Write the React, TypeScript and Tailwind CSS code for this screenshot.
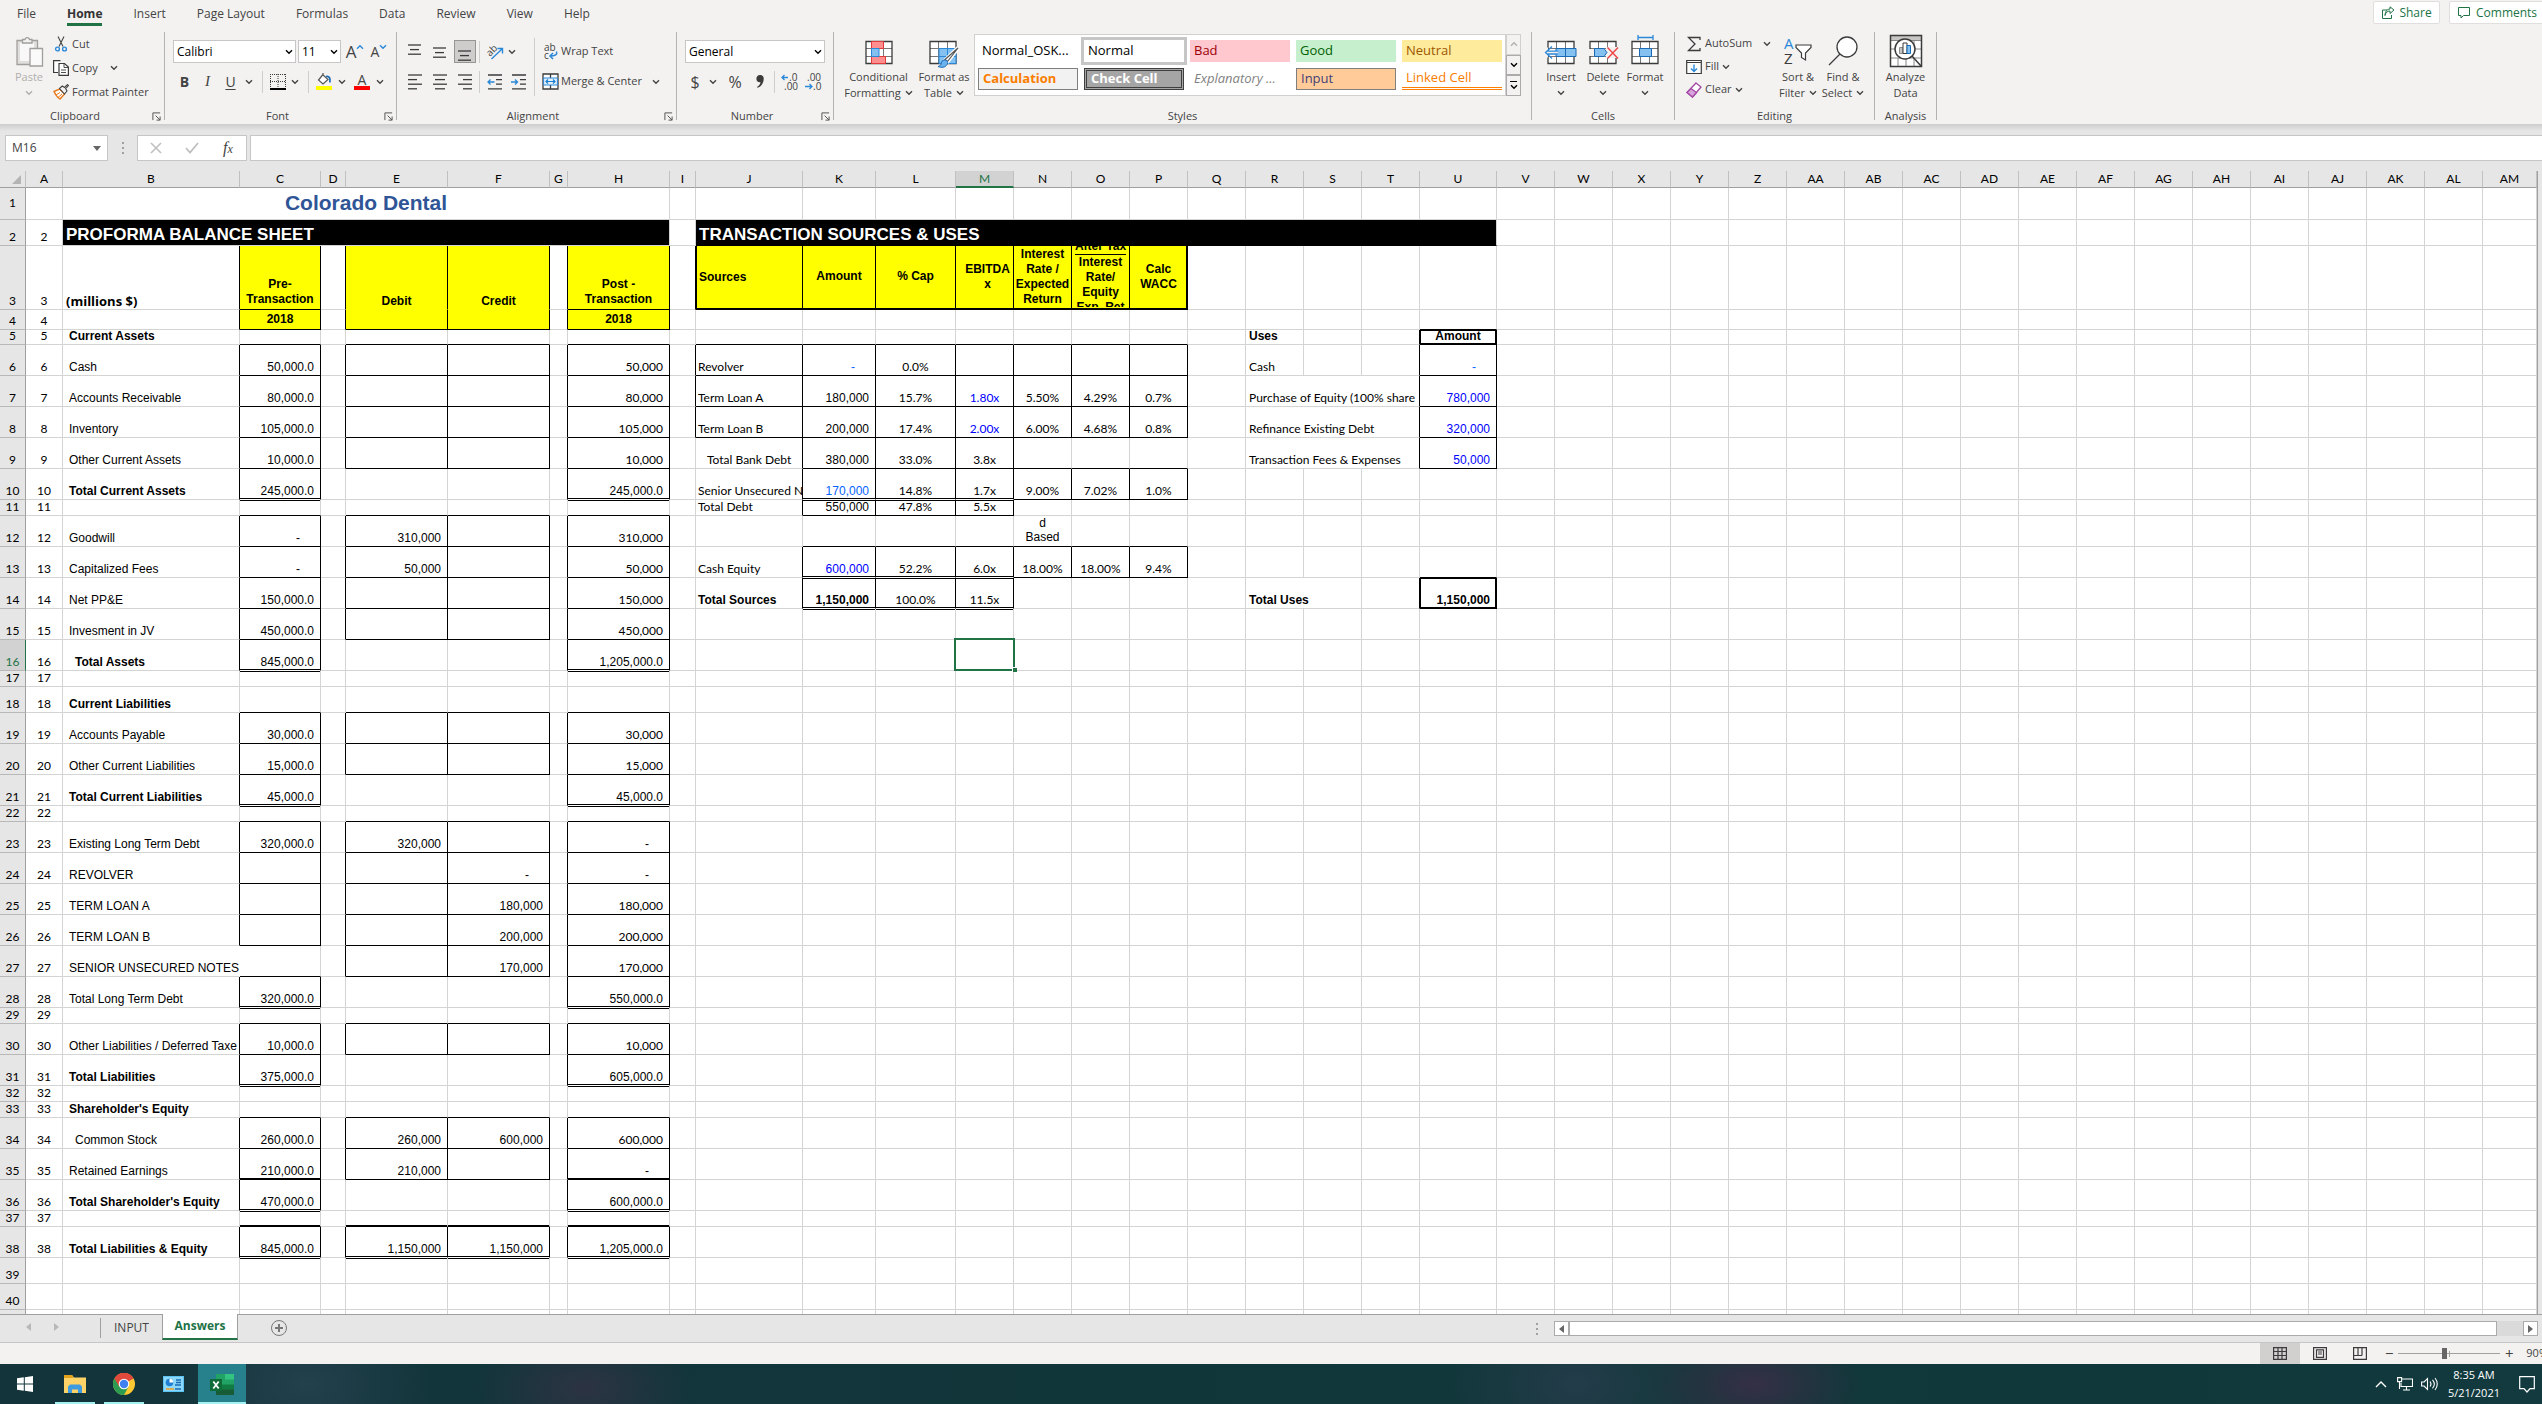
import type { ReactNode } from "react";
import clsx from "clsx";

/* ------------------------------------------------------------------ */
/* Sheet geometry                                                      */
/* ------------------------------------------------------------------ */

const COLS: [string, number][] = [
  ["A", 37], ["B", 177], ["C", 81], ["D", 25], ["E", 102], ["F", 102], ["G", 18], ["H", 102], ["I", 26],
  ["J", 107], ["K", 73], ["L", 80], ["M", 58], ["N", 58], ["O", 58], ["P", 58], ["Q", 58], ["R", 58],
  ["S", 58], ["T", 58], ["U", 77], ["V", 58], ["W", 58], ["X", 58], ["Y", 58], ["Z", 58], ["AA", 58],
  ["AB", 58], ["AC", 58], ["AD", 58], ["AE", 58], ["AF", 58], ["AG", 58], ["AH", 58], ["AI", 58],
  ["AJ", 58], ["AK", 58], ["AL", 58], ["AM", 0],
];

const ROW_HEIGHTS = [
  32, 26, 64, 20, 15, 31, 31, 31, 31, 31, 16, 31, 31, 31, 31, 31, 16, 26, 31, 31, 31, 16, 31, 31, 31, 31, 31,
  31, 16, 31, 31, 16, 16, 31, 31, 31, 16, 31, 26, 26,
];

const colIndex = (name: string) => COLS.findIndex(([c]) => c === name);

/* ------------------------------------------------------------------ */
/* Cell borders                                                        */
/* ------------------------------------------------------------------ */

const blackRight = new Set<string>();
const blackBottom = new Set<string>();
const doubleBottom = new Set<string>();
const thickBottom = new Set<string>();

function box(from: string, r1: number, to: string, r2: number) {
  for (let c = colIndex(from); c <= colIndex(to); c++) {
    for (let r = r1; r <= r2; r++) {
      blackRight.add(COLS[c][0] + r);
      blackRight.add(COLS[c - 1][0] + r);
      blackBottom.add(COLS[c][0] + r);
      blackBottom.add(COLS[c][0] + (r - 1));
    }
  }
}

const BOXES: [string, number, string, number][] = [
  ["C", 3, "C", 4], ["E", 3, "F", 4], ["H", 3, "H", 4],
  ["C", 6, "C", 10], ["E", 6, "F", 9], ["H", 6, "H", 10],
  ["C", 12, "C", 16], ["E", 12, "F", 15], ["H", 12, "H", 16],
  ["C", 19, "C", 21], ["E", 19, "F", 20], ["H", 19, "H", 21],
  ["C", 23, "C", 26], ["E", 23, "F", 27], ["H", 23, "H", 28], ["C", 28, "C", 28],
  ["C", 30, "C", 31], ["E", 30, "F", 30], ["H", 30, "H", 31],
  ["C", 34, "C", 36], ["E", 34, "F", 35], ["H", 34, "H", 36],
  ["C", 38, "C", 38], ["E", 38, "F", 38], ["H", 38, "H", 38],
  ["J", 3, "P", 3], ["J", 6, "P", 8], ["K", 9, "M", 9], ["K", 10, "P", 10], ["K", 11, "M", 11],
  ["K", 13, "P", 13], ["K", 14, "M", 14],
  ["U", 5, "U", 9], ["U", 14, "U", 14],
];
BOXES.forEach((b) => box(...b));

["C10", "H10", "C16", "H16", "C21", "H21", "C28", "H28", "C31", "H31", "C36", "H36", "C38", "E38", "F38", "H38",
  "K10", "L10", "M10", "K13", "L13", "M13", "K14", "L14", "M14"].forEach((k) => doubleBottom.add(k));
["C35", "H35", "C37", "E37", "F37", "H37", "K3", "L3", "M3", "N3", "O3"].forEach((k) => thickBottom.add(k));
["E3", "F3"].forEach((k) => blackBottom.delete(k));

/* ------------------------------------------------------------------ */
/* Cell contents                                                       */
/* ------------------------------------------------------------------ */

const ARIAL = "font-['Liberation_Sans',Arial,sans-serif] text-[12px]";
const CALIBRI = "font-[Lato,Calibri,sans-serif] text-[12px]";
const UI = "font-['Open_Sans','Segoe_UI',sans-serif]";

const label = `${ARIAL} pl-1.5 text-left`;
const labelBold = `${ARIAL} pl-1.5 text-left font-bold`;
const num = `${ARIAL} pr-1.5 text-right`;
const numC = `${CALIBRI} pr-1.5 text-right`;
const dash = `${ARIAL} pr-5 text-right`;
const head = `${ARIAL} text-center font-bold bg-[#ffff00]`;
const side = `${CALIBRI} pl-0.5 text-left`;
const mid = `${CALIBRI} text-center`;
const BLUE = "text-[#0000ff]";
const SKY = "text-[#0563ff]";
const BAND = "bg-black text-white font-['Liberation_Sans',Arial,sans-serif] text-[17px] font-bold pl-[3px] text-left";

type Cell = { text: ReactNode; cls: string; span?: number };
const cells: Record<string, Cell> = {};
const put = (ref: string, text: ReactNode, cls: string, span?: number) => {
  cells[ref] = { text, cls, span };
};

put("B1", "Colorado Dental", "text-center align-middle font-['Liberation_Sans',Arial,sans-serif] text-[21px] font-bold text-[#2f5597]", 7);
put("B2", <div className="leading-[17px]">PROFORMA BALANCE SHEET</div>, BAND, 7);
put("J2", <div className="leading-[17px]">TRANSACTION SOURCES & USES</div>, BAND, 12);

put("B3", "(millions $)", `${UI} text-[13px] font-bold pl-[3px] text-left`);
put("C3", <div className="leading-[15px]">Pre-<br />Transaction</div>, head);
put("E3", "Debit", head);
put("F3", "Credit", head);
put("H3", <div className="leading-[15px]">Post -<br />Transaction</div>, head);
put("C4", "2018", `${head} align-middle`);
put("E4", "", head);
put("F4", "", head);
put("H4", "2018", `${head} align-middle`);

const tall = (lines: ReactNode) => (
  <div className="flex h-[61px] flex-col items-center justify-center overflow-hidden leading-[15px]">{lines}</div>
);
put("J3", "Sources", `${ARIAL} bg-[#ffff00] pl-[3px] text-left font-bold align-middle shadow-[inset_1px_-1px_0_#000]`);
put("K3", tall("Amount"), head);
put("L3", tall("% Cap"), head);
put("M3", tall(<><span>EBITDA</span><span>x</span></>), `${head} pl-1.5`);
put("N3", tall(<><span>Interest</span><span>Rate /</span><span>Expected</span><span>Return</span></>), head);
put("O3", tall(
  <>
    <span className="border-b border-black whitespace-nowrap">After Tax</span>
    <span>Interest</span><span>Rate/</span><span>Equity</span>
    <span className="whitespace-nowrap">Exp. Ret</span>
  </>,
), head);
put("P3", tall(<><span>Calc</span><span>WACC</span></>), `${head} shadow-[inset_-1px_-1px_0_#000]`);

put("B5", "Current Assets", labelBold);
put("R5", "Uses", `${ARIAL} pl-[3px] text-left font-bold`);
put("U5", "Amount", `${ARIAL} text-center font-bold shadow-[inset_0_0_0_1px_#000]`);

const LABELS: [number, string, "b" | "n" | "i" | "bi"][] = [
  [6, "Cash", "n"], [7, "Accounts Receivable", "n"], [8, "Inventory", "n"], [9, "Other Current Assets", "n"],
  [10, "Total Current Assets", "b"], [12, "Goodwill", "n"], [13, "Capitalized Fees", "n"], [14, "Net PP&E", "n"],
  [15, "Invesment in JV", "n"], [16, "Total Assets", "bi"], [18, "Current Liabilities", "b"],
  [19, "Accounts Payable", "n"], [20, "Other Current Liabilities", "n"], [21, "Total Current Liabilities", "b"],
  [23, "Existing Long Term Debt", "n"], [24, "REVOLVER", "n"], [25, "TERM LOAN A", "n"], [26, "TERM LOAN B", "n"],
  [27, "SENIOR UNSECURED NOTES", "n"], [28, "Total Long Term Debt", "n"], [30, "Other Liabilities / Deferred Taxe", "n"],
  [31, "Total Liabilities", "b"], [33, "Shareholder's Equity", "b"], [34, "Common Stock", "i"],
  [35, "Retained Earnings", "n"], [36, "Total Shareholder's Equity", "b"], [38, "Total Liabilities & Equity", "b"],
];
LABELS.forEach(([r, text, kind]) => {
  const styles = { n: label, b: labelBold, i: `${ARIAL} pl-3 text-left`, bi: `${ARIAL} pl-3 text-left font-bold` };
  put(`B${r}`, text, styles[kind]);
});

// pre-transaction, debit, credit, post-transaction
const VALUES: [number, string, string, string, string][] = [
  [6, "50,000.0", "", "", "50,000"], [7, "80,000.0", "", "", "80,000"], [8, "105,000.0", "", "", "105,000"],
  [9, "10,000.0", "", "", "10,000"], [10, "245,000.0", "", "", "245,000.0"], [12, "-", "310,000", "", "310,000"],
  [13, "-", "50,000", "", "50,000"], [14, "150,000.0", "", "", "150,000"], [15, "450,000.0", "", "", "450,000"],
  [16, "845,000.0", "", "", "1,205,000.0"], [19, "30,000.0", "", "", "30,000"], [20, "15,000.0", "", "", "15,000"],
  [21, "45,000.0", "", "", "45,000.0"], [23, "320,000.0", "320,000", "", "-"], [24, "", "", "-", "-"],
  [25, "", "", "180,000", "180,000"], [26, "", "", "200,000", "200,000"], [27, "", "", "170,000", "170,000"],
  [28, "320,000.0", "", "", "550,000.0"], [30, "10,000.0", "", "", "10,000"], [31, "375,000.0", "", "", "605,000.0"],
  [34, "260,000.0", "260,000", "600,000", "600,000"], [35, "210,000.0", "210,000", "", "-"],
  [36, "470,000.0", "", "", "600,000.0"], [38, "845,000.0", "1,150,000", "1,150,000", "1,205,000.0"],
];
VALUES.forEach(([r, pre, debit, credit, post]) => {
  const add = (col: string, v: string, cls: string) => v && put(col + r, v, v === "-" ? dash : cls);
  add("C", pre, num);
  add("E", debit, num);
  add("F", credit, num);
  add("H", post, post.endsWith(".0") ? num : numC);
});

put("J6", "Revolver", side);
put("K6", "-", `${dash} ${SKY}`);
put("L6", "0.0%", mid);
put("J7", "Term Loan A", side);
put("J8", "Term Loan B", side);
put("J9", "Total Bank Debt", `${CALIBRI} pl-[11px] text-left`);
put("J10", "Senior Unsecured Notes", `${side} overflow-hidden`);
put("J11", "Total Debt", side);
put("J13", "Cash Equity", side);
put("J14", "Total Sources", `${ARIAL} pl-0.5 text-left font-bold`);
put("N12", <div className="leading-[14px]">d<br />Based</div>, `${ARIAL} text-center`);

const SOURCES: [number, string, string, string, string?, string?, string?][] = [
  [7, "180,000", "15.7%", "1.80x", "5.50%", "4.29%", "0.7%"],
  [8, "200,000", "17.4%", "2.00x", "6.00%", "4.68%", "0.8%"],
  [9, "380,000", "33.0%", "3.8x"],
  [10, "170,000", "14.8%", "1.7x", "9.00%", "7.02%", "1.0%"],
  [11, "550,000", "47.8%", "5.5x"],
  [13, "600,000", "52.2%", "6.0x", "18.00%", "18.00%", "9.4%"],
  [14, "1,150,000", "100.0%", "11.5x"],
];
SOURCES.forEach(([r, amount, cap, mult, ...rates]) => {
  put(`K${r}`, amount, clsx(num, r === 10 && SKY, r === 13 && BLUE, r === 14 && "font-bold"));
  put(`L${r}`, cap, mid);
  put(`M${r}`, mult, clsx(mid, r < 9 && BLUE));
  rates.forEach((v, i) => v && put("NOP"[i] + r, v, mid));
});

put("R6", "Cash", `${CALIBRI} pl-[3px] text-left`);
put("R7", "Purchase of Equity (100% share", `${CALIBRI} pl-[3px] text-left`, 3);
put("R8", "Refinance Existing Debt", `${CALIBRI} pl-[3px] text-left`, 3);
put("R9", "Transaction Fees & Expenses", `${CALIBRI} pl-[3px] text-left`, 3);
put("R14", "Total Uses", `${ARIAL} pl-[3px] text-left font-bold`, 2);
put("U6", "-", `${dash} ${SKY}`);
put("U7", "780,000", `${num} ${BLUE}`);
put("U8", "320,000", `${num} ${BLUE}`);
put("U9", "50,000", `${num} ${BLUE}`);
put("U14", "1,150,000", `${num} font-bold shadow-[inset_0_0_0_1px_#000]`);

put("M16", (
  <>
    <span className="absolute -inset-x-0.5 -top-0.5 -bottom-px border-2 border-[#217346]" />
    <span className="absolute -right-1 -bottom-0.5 size-[5px] border-t border-l border-white bg-[#217346]" />
  </>
), "relative");

/* ------------------------------------------------------------------ */
/* Small drawing helpers                                               */
/* ------------------------------------------------------------------ */

function Chevron({ className = "text-[#444]" }: { className?: string }) {
  return (
    <svg viewBox="0 0 8 6" className={clsx("h-1.5 w-2 shrink-0", className)} fill="none" stroke="currentColor" strokeWidth="1.4">
      <path d="M1 1.2 4 4.2 7 1.2" />
    </svg>
  );
}

function Lines({ rows, y = 1 }: { rows: [number, number][]; y?: number }) {
  return (
    <svg viewBox="0 0 16 18" className="h-[18px] w-4" stroke="#3b3b3b" strokeWidth="1.3">
      {rows.map(([x1, x2], i) => (
        <path key={i} d={`M${x1} ${y + i * 4.6}H${x2}`} />
      ))}
    </svg>
  );
}

function Launcher({ name }: { name: string }) {
  return (
    <button aria-label={`${name} settings`} className="mr-0.5 grid size-3 place-items-center">
      <svg viewBox="0 0 10 10" className="size-[9px]" fill="none" stroke="#555" strokeWidth="1.1">
        <path d="M1 9V1h8M4 4l5 5M9 5v4H5" />
      </svg>
    </button>
  );
}

function Group({ name, launcher, className, children }: { name: string; launcher?: boolean; className?: string; children: ReactNode }) {
  return (
    <section aria-label={name} className="flex shrink-0">
      <div className={clsx("flex flex-col", className)}>
        <div className="flex h-[76px] items-start">{children}</div>
        <div className="flex h-4 items-center leading-4">
          <span className="flex-1 text-center">{name}</span>
          {launcher && <Launcher name={name} />}
        </div>
      </div>
      <span className="h-[88px] w-px bg-[#b5b3b1]" />
    </section>
  );
}

function Tool({ name, className, children }: { name: string; className?: string; children: ReactNode }) {
  return (
    <button aria-label={name} title={name} className={clsx("flex h-[23px] shrink-0 items-center justify-center", className)}>
      {children}
    </button>
  );
}

function BigTool({ icon, top, bottom, chevron = true, className }: { icon: ReactNode; top: string; bottom?: string; chevron?: boolean; className?: string }) {
  return (
    <button className={clsx("flex shrink-0 flex-col items-center leading-4 whitespace-nowrap", className)}>
      <span className="flex h-[37px] items-center justify-center">{icon}</span>
      <span>{top}</span>
      <span className="flex h-4 items-center gap-1">
        {bottom}
        {chevron && <Chevron className="text-current" />}
      </span>
    </button>
  );
}

const Rule = ({ className }: { className?: string }) => <span className={clsx("h-[22px] w-px shrink-0 bg-[#d0cecc]", className)} />;

/* Grid used as the base of the cell/table icons */
function GridIcon({ children, x = 0 }: { children?: ReactNode; x?: number }) {
  return (
    <svg viewBox="0 0 34 34" className="size-[34px]" fill="none">
      <path d={`M${x + 3} 7.5h26v22h-26z`} fill="#fff" />
      <path d={`M${x + 11.5} 7.5v22M${x + 20.5} 7.5v22M${x + 3} 14.5h26M${x + 3} 22.5h26`} stroke="#777" />
      <path d={`M${x + 3} 7.5h26v22h-26z`} stroke="#3b3b3b" strokeWidth="1.3" />
      {children}
    </svg>
  );
}

/* ------------------------------------------------------------------ */
/* Ribbon                                                              */
/* ------------------------------------------------------------------ */

function Tabs() {
  const tabs = ["File", "Home", "Insert", "Page Layout", "Formulas", "Data", "Review", "View", "Help"];
  return (
    <nav className="flex h-[27px] items-start text-[12px]">
      <div className="flex gap-[31px] pl-[17px]">
        {tabs.map((t) => (
          <button
            key={t}
            className={clsx("h-[26px] leading-[27px]", t === "Home" && "border-b-3 border-[#217346] font-bold text-[#333]")}
          >
            {t}
          </button>
        ))}
      </div>
      <div className="ml-auto flex gap-[9px] pt-px text-[#217346]">
        <button className="flex h-[23px] w-[67px] items-center justify-center gap-1 rounded-xs border border-[#e1dfdd] bg-white">
          <svg viewBox="0 0 14 14" className="size-3.5" fill="none" stroke="currentColor">
            <path d="M6 4H1.5v8.500h9V9M4 9.500c.5-3 2.500-4.500 5-4.500V7.500L13 4 9 .8V3C6 3 4.200 5.500 4 9.500z" />
          </svg>
          Share
        </button>
        <button className="-mr-1 flex h-[23px] w-[97px] items-center gap-[5px] rounded-xs border border-[#e1dfdd] bg-white pl-[7px]">
          <svg viewBox="0 0 14 14" className="size-3.5" fill="none" stroke="currentColor">
            <path d="M1.500 1.500h11v8H6.500L4 12V9.500H1.500z" />
          </svg>
          Comments
        </button>
      </div>
    </nav>
  );
}

function Clipboard() {
  return (
    <Group name="Clipboard" launcher className="w-[164px]">
      <BigTool
        className="ml-[9px] w-10 text-[#b1afad]"
        top="Paste"
        icon={
          <svg viewBox="0 0 30 32" className="h-8 w-[30px]" fill="none" stroke="#a19f9d" strokeWidth="1.3">
            <path d="M3 5.500h20.500v24H3z" fill="#e1dfdd" />
            <path d="M6 8h14v18H6z" fill="#f8f8f8" stroke="none" />
            <path d="M8.500 8V4.500H11a2.300 2.300 0 0 1 4.500 0H18V8z" fill="#f3f2f1" />
            <path d="M16 13.500h12.500v17.500H16z" fill="#fafafa" />
          </svg>
        }
      />
      <div className="ml-1 flex flex-col">
        <button className="flex h-6 items-center gap-[3px]">
          <svg viewBox="0 0 16 16" className="size-4" fill="none" stroke="#444" strokeWidth="1.100">
            <path d="M5 .5l5 10M11 .5l-5 10" />
            <g stroke="#2b88d8" strokeWidth="1.400"><circle cx="4.500" cy="13" r="1.900" /><circle cx="11.500" cy="13" r="1.900" /></g>
          </svg>
          Cut
        </button>
        <button className="flex h-6 items-center gap-[3px]">
          <svg viewBox="0 0 16 16" className="size-4" fill="none" stroke="#3b3b3b" strokeWidth="1.200">
            <path d="M5 12.500H.6V.6h6.900M6 3.500h5.500L15.400 7v8.400H6z" fill="#fff" />
            <path d="M11 3.500v4h4M8 10h5M8 12.500h5" strokeWidth=".9" />
          </svg>
          Copy
          <Chevron className="ml-[9px] text-[#444]" />
        </button>
        <button className="flex h-6 items-center gap-[3px] whitespace-nowrap">
          <svg viewBox="0 0 16 16" className="size-4" fill="none">
            <path d="M1 7.500 6.500 5l5 5-4.500 5C4.500 13.500 2.500 11 1 7.500z" fill="#fff" stroke="#e8791b" strokeWidth="1.400" />
            <path d="M3 11l4-2.500M5 13.500 9 10" stroke="#e8791b" />
            <path d="M6.500 4.500 9.300 2l2.200 1.500L14.500.6l1 1-2.900 3L14 7l-2.500 3z" fill="#f3f2f1" stroke="#444" strokeWidth="1.100" />
          </svg>
          Format Painter
        </button>
      </div>
    </Group>
  );
}

function FontGroup() {
  return (
    <Group name="Font" launcher className="w-[231px] pl-2">
      <div className="flex flex-col gap-[7px] pt-2">
        <div className="flex">
          <Drop name="Font name" value="Calibri" className="w-[123px]" />
          <Drop name="Font size" value="11" className="ml-0.5 w-[43px]" />
          <Tool name="Increase font size" className="ml-0.5 w-6">
            <span className="text-[17px] leading-none">A</span>
            <Chevron className="mb-2.5 rotate-180 text-[#2b88d8]" />
          </Tool>
          <Tool name="Decrease font size" className="w-6">
            <span className="text-[14px] leading-none">A</span>
            <Chevron className="mb-2.5 text-[#2b88d8]" />
          </Tool>
        </div>
        <div className="flex items-center text-[14px]">
          <Tool name="Bold" className="w-[23px] font-bold">B</Tool>
          <Tool name="Italic" className="w-[23px] font-['Liberation_Serif',serif] text-[15px] italic">I</Tool>
          <Tool name="Underline" className="w-[23px] underline underline-offset-2">U</Tool>
          <Tool name="Underline styles" className="w-3.5"><Chevron /></Tool>
          <Rule className="mx-1.5" />
          <Tool name="Borders" className="w-[18px]">
            <svg viewBox="0 0 16 16" className="size-4" fill="none" stroke="#3b3b3b">
              <path d="M.5 0v14M8 0v14M15.500 0v14M0 .5h16M0 7.500h16" strokeDasharray="1 1" />
              <path d="M0 15h16" strokeWidth="2" stroke="#000" />
            </svg>
          </Tool>
          <Tool name="Border styles" className="w-4"><Chevron /></Tool>
          <Rule className="mx-[5px]" />
          <Tool name="Fill color" className="w-5">
            <svg viewBox="0 0 16 17" className="h-[17px] w-4" fill="none">
              <path d="M7 1.500 2.500 7l4.500 4 5-4.500L7 2V0" fill="#fff" stroke="#555" strokeWidth="1.200" />
              <path d="M10 3.500c3-.8 4.800 1.500 3.800 6" stroke="#1a6bb5" strokeWidth="1.800" />
              <path d="M0 13h16v4H0z" fill="#ff0" />
            </svg>
          </Tool>
          <Tool name="Fill colors" className="w-4"><Chevron /></Tool>
          <Tool name="Font color" className="w-6 flex-col">
            <span className="text-[14px] leading-[13px]">A</span>
            <span className="h-1 w-4 bg-[#f00]" />
          </Tool>
          <Tool name="Font colors" className="w-3"><Chevron /></Tool>
        </div>
      </div>
    </Group>
  );
}

function Drop({ name, value, className }: { name: string; value: string; className?: string }) {
  return (
    <label className={clsx("relative flex h-[23px] items-center border border-[#c8c6c4] bg-white text-[12px] text-black", className)}>
      <select aria-label={name} className="h-full w-full appearance-none pl-[3px] outline-none">
        <option>{value}</option>
      </select>
      <span className="pointer-events-none absolute right-0.5"><Chevron className="text-black" /></span>
    </label>
  );
}

function Alignment() {
  return (
    <Group name="Alignment" launcher className="w-[279px] pl-[7px]">
      <div className="flex w-[130px] flex-col gap-[7px] pt-2">
        <div className="flex items-center gap-[3px]">
          <Tool name="Top align" className="w-[22px]"><Lines rows={[[1, 14], [3, 12], [1, 14]]} y={2} /></Tool>
          <Tool name="Middle align" className="w-[22px]"><Lines rows={[[1, 14], [3, 12], [1, 14]]} y={5} /></Tool>
          <Tool name="Bottom align" className="w-[22px] border border-[#979593] bg-[#cfcdcb]"><Lines rows={[[1, 14], [3, 12], [1, 14]]} y={8} /></Tool>
          <Rule />
          <Tool name="Orientation" className="ml-0.5 w-5">
            <svg viewBox="0 0 18 18" className="size-[18px] overflow-visible" fill="none">
              <text x="1" y="11" fontSize="10" fill="#444" transform="rotate(-45 6 9)">ab</text>
              <path d="M5.500 16 16 6M11.500 5.500H16.500V10.500" stroke="#2b88d8" strokeWidth="1.400" />
            </svg>
          </Tool>
          <Chevron />
        </div>
        <div className="flex items-center gap-[3px]">
          <Tool name="Align left" className="w-[22px]"><Lines rows={[[1, 15], [1, 10], [1, 15], [1, 10]]} y={2} /></Tool>
          <Tool name="Center" className="w-[22px]"><Lines rows={[[1, 15], [3, 13], [1, 15], [3, 13]]} y={2} /></Tool>
          <Tool name="Align right" className="w-[22px]"><Lines rows={[[1, 15], [6, 15], [1, 15], [6, 15]]} y={2} /></Tool>
          <Rule />
          {["Decrease indent", "Increase indent"].map((n, i) => (
            <Tool key={n} name={n} className="ml-0.5 w-[19px]">
              <svg viewBox="0 0 16 18" className="h-[18px] w-4" fill="none" strokeWidth="1.300">
                <path d="M1 2h14M9 6.600h6M9 11.200h6M1 15.800h14" stroke="#3b3b3b" />
                <path d={i ? "M0 9h6.500M4 6.500 6.500 9 4 11.500" : "M1 9h6.500M3.500 6.500 1 9l2.500 2.500"} stroke="#2b88d8" />
              </svg>
            </Tool>
          ))}
        </div>
      </div>
      <span className="mt-1.5 h-[58px] w-px bg-[#d0cecc]" />
      <div className="flex flex-col gap-[7px] pt-2 pl-[7px] whitespace-nowrap">
        <button className="flex h-[23px] items-center gap-0.5">
          <svg viewBox="0 0 17 20" className="h-5 w-[17px] overflow-visible" fill="none">
            <text x="2" y="9" fontSize="10" fill="#444">ab</text>
            <text x="2" y="17" fontSize="10" fill="#444">c</text>
            <path d="M14.500 9.500c1 3-1 4.500-6.500 4.500M11 11l-3 3 3 3" stroke="#2b88d8" strokeWidth="1.500" />
          </svg>
          Wrap Text
        </button>
        <button className="flex h-[23px] items-center gap-0.5">
          <svg viewBox="0 0 17 17" className="size-[17px]" fill="none">
            <path d="M1 1h15v15H1zM8.500 1v4M8.500 12v4" fill="#fff" stroke="#3b3b3b" strokeWidth="1.300" />
            <path d="M1.600 5h13.800v7H1.600z" fill="#e5f1fb" stroke="#2b88d8" />
            <path d="M4 8.500h9M6 6.500l-2 2 2 2M11 6.500l2 2-2 2" stroke="#1a7fd0" strokeWidth="1.200" />
          </svg>
          Merge & Center
          <Chevron className="ml-2 text-[#444]" />
        </button>
      </div>
    </Group>
  );
}

function Decimals({ up }: { up?: boolean }) {
  return (
    <svg viewBox="0 0 18 18" className="size-[18px] overflow-visible" fill="none">
      <text x={up ? 8 : 3} y="8" fontSize="10" fill="#444">{up ? ".0" : ".00"}</text>
      <text x={up ? 3 : 9} y="17" fontSize="10" fill="#444">{up ? ".00" : ".0"}</text>
      <path d={up ? "M1 4.500h6M3.500 2 1 4.500 3.500 7" : "M1 13.500h7M5.500 11 8 13.500 5.500 16"} stroke="#2b88d8" strokeWidth="1.300" />
    </svg>
  );
}

function NumberGroup() {
  return (
    <Group name="Number" launcher className="w-[156px] pl-2">
      <div className="flex flex-col gap-[7px] pt-2">
        <Drop name="Number format" value="General" className="w-[140px]" />
        <div className="flex items-center text-[16px]">
          <Tool name="Accounting format" className="w-5">$</Tool>
          <Tool name="Currencies" className="w-4"><Chevron /></Tool>
          <Tool name="Percent style" className="w-7">%</Tool>
          <Tool name="Comma style" className="w-[22px]">
            <svg viewBox="0 0 8 13" className="h-[13px] w-2" fill="#3b3b3b">
              <path d="M4 0a3.500 3.500 0 0 1 3.700 3.800C7.700 8 5.500 11.500 1.500 12.800L1 11.900C3.200 10.800 4.300 9 4.500 7.200 2 7.700.4 6 .4 3.700.4 1.500 2 0 4 0z" />
            </svg>
          </Tool>
          <Rule className="ml-[3px]" />
          <Tool name="Increase decimal" className="ml-1 w-[22px]"><Decimals up /></Tool>
          <Tool name="Decrease decimal" className="w-6"><Decimals /></Tool>
        </div>
      </div>
    </Group>
  );
}

function StylesGroup() {
  const styles: [string, string][] = [
    ["Normal_OSK...", "text-black"],
    ["Normal", "text-black outline-3 outline-[#c6c6c6] ring-1 ring-[#ababab] bg-white"],
    ["Bad", "bg-[#ffc7ce] text-[#9c0006]"],
    ["Good", "bg-[#c6efce] text-[#006100]"],
    ["Neutral", "bg-[#ffeb9c] text-[#9c5700]"],
    ["Calculation", "border border-[#7f7f7f] bg-[#f2f2f2] font-bold text-[#fa7d00]"],
    ["Check Cell", "border-3 border-double border-[#3f3f3f] bg-[#a5a5a5] font-bold text-white"],
    ["Explanatory ...", "text-[#7f7f7f] italic"],
    ["Input", "border border-[#7f7f7f] bg-[#ffcc99] text-[#3f3f76]"],
    ["Linked Cell", "border-b-3 border-double border-[#ff8001] text-[#fa7d00]"],
  ];
  return (
    <Group name="Styles" className="w-[697px]">
      <BigTool
        className="ml-[5px] w-[79px]"
        top="Conditional"
        bottom="Formatting"
        icon={
          <GridIcon x={1}>
            <path d="M9.500 7.500h12v7h-12zM9.500 22.500h14v7h-14z" fill="#ff8f8f" stroke="#e03a3a" />
            <path d="M9.500 14.500h7.500v8H9.500z" fill="#84c0f0" stroke="#2b88d8" />
          </GridIcon>
        }
      />
      <BigTool
        className="w-[52px]"
        top="Format as"
        bottom="Table"
        icon={
          <GridIcon>
            <path d="M12 14.500h17v15H12z" fill="#84c0f0" stroke="#2b88d8" />
            <path d="M20.500 14.500v15M12 22.500h17" stroke="#2b88d8" />
            <path d="M31 14 21 27l-2-1.500z" fill="#fff" stroke="#fff" strokeWidth="4" />
            <path d="M31 14 20.500 27.500 18 25.500z" fill="#fff" stroke="#555" strokeWidth="1.200" />
            <path d="M17 26c3-.5 4.500 2 3 4.500-1.500 3-5.500 3.500-9 2 2-.5 3-1.500 3.200-3 .3-2 1.200-3.200 2.800-3.500z" fill="#6cb2ec" stroke="#1a6bb5" />
          </GridIcon>
        }
      />
      <div className="mt-0.5 ml-1 flex h-[62px]">
        <div className="grid w-[532px] grid-cols-5 gap-1.5 border border-[#d2d0ce] bg-white px-[3px] py-[5px] text-[13px]">
          {styles.map(([name, cls]) => (
            <button key={name} className={clsx("flex h-[22px] items-center pl-1 text-left whitespace-nowrap", cls)}>
              {name}
            </button>
          ))}
        </div>
        <div className="flex w-[15px] flex-col">
          <Tool name="Previous styles" className="w-full flex-1 border border-[#d2d0ce] bg-[#f3f2f1]"><Chevron className="rotate-180 text-[#b0b0b0]" /></Tool>
          <Tool name="Next styles" className="w-full flex-1 border border-[#ababab]"><Chevron className="text-black" /></Tool>
          <Tool name="More styles" className="w-full flex-1 flex-col gap-0.5 border border-[#ababab]">
            <span className="h-px w-[7px] bg-black" />
            <Chevron className="text-black" />
          </Tool>
        </div>
      </div>
    </Group>
  );
}

function CellsGroup() {
  return (
    <Group name="Cells" className="w-[142px] px-2">
      <BigTool
        className="w-[42px]"
        top="Insert"
        icon={
          <GridIcon x={1}>
            <path d="M12 14.500h20v8H12z" fill="#84c0f0" stroke="#1a6bb5" />
            <path d="M21.500 14.500v8" stroke="#1a6bb5" />
            <path d="M14 17H4V13L-1 18.500 4 24v-3.500h10z" fill="#f3f2f1" />
            <path d="M14 17.200H3.500M14 20H3.500M8 12.500 1.500 18.500 8 24.500" stroke="#2b88d8" strokeWidth="1.300" />
          </GridIcon>
        }
      />
      <BigTool
        className="w-[42px]"
        top="Delete"
        icon={
          <GridIcon x={1}>
            <path d="M3 15h6v7H3zM20 13h13v11H20z" fill="#f3f2f1" />
            <path d="M8.500 14.500H18l3 4-3 4H8.500z" fill="#84c0f0" stroke="#1a6bb5" />
            <path d="M21.500 13.500 32 24.500M32 13.500 21.500 24.500" stroke="#f04848" strokeWidth="1.500" />
          </GridIcon>
        }
      />
      <BigTool
        className="w-[42px]"
        top="Format"
        icon={
          <GridIcon x={1}>
            <path d="M11.500 14.500h12v8h-12z" fill="#84c0f0" stroke="#1a6bb5" />
            <path d="M10 3.500h15M10 1v5M25 1v5" stroke="#2b88d8" strokeWidth="1.300" />
          </GridIcon>
        }
      />
    </Group>
  );
}

function EditingGroup() {
  return (
    <Group name="Editing" className="w-[199px]">
      <div className="ml-[11px] flex w-[92px] flex-col">
        <button className="flex h-[23px] items-center gap-[3px]">
          <svg viewBox="0 0 16 16" className="size-4" fill="none" stroke="#3b3b3b" strokeWidth="1.300">
            <path d="M14 4V1.500H2.500L9 8l-6.500 6.500H14V12" />
          </svg>
          AutoSum
          <Chevron className="ml-2 text-[#444]" />
        </button>
        <button className="flex h-[23px] items-center gap-[3px]">
          <svg viewBox="0 0 16 16" className="size-4" fill="none">
            <path d="M.7 1.500h14.600v13H.7zM.7 3.500h14.600" fill="#fff" stroke="#3b3b3b" strokeWidth="1.200" />
            <path d="M8 5.500v7M5 9.500l3 3 3-3" stroke="#2b88d8" strokeWidth="1.400" />
          </svg>
          Fill
          <Chevron />
        </button>
        <button className="flex h-[23px] items-center gap-[3px]">
          <svg viewBox="0 0 16 16" className="size-4" fill="none" stroke="#a349a4" strokeWidth="1.300">
            <path d="M10 1 15 5 6.500 15 1 10.500z" fill="#fff" />
            <path d="M5 6.500 10.500 10.500 6.500 15 1 10.500z" fill="#d9a3dc" />
          </svg>
          Clear
          <Chevron />
        </button>
      </div>
      <BigTool
        className="w-10"
        top="Sort &"
        bottom="Filter"
        icon={
          <svg viewBox="0 0 30 34" className="h-[34px] w-[30px] overflow-visible" fill="none">
            <text x="1" y="15" fontSize="15" fill="#2b88d8">A</text>
            <text x="1" y="30" fontSize="15" fill="#3b3b3b">Z</text>
            <path d="M13 11h15v2.500l-5.500 5.500v7l-4-2.500V19L13 13.500z" fill="#fff" stroke="#3b3b3b" strokeWidth="1.200" />
          </svg>
        }
      />
      <BigTool
        className="ml-0.5 w-[46px]"
        top="Find &"
        bottom="Select"
        icon={
          <svg viewBox="0 0 30 34" className="h-[34px] w-[30px]" fill="none" stroke="#3b3b3b" strokeWidth="1.300">
            <circle cx="19" cy="13" r="10" fill="#fff" />
            <path d="M12 20 1 31" />
          </svg>
        }
      />
    </Group>
  );
}

function AnalysisGroup() {
  return (
    <Group name="Analysis" className="w-[61px] items-stretch">
      <BigTool
        className="w-full"
        top="Analyze"
        bottom="Data"
        chevron={false}
        icon={
          <svg viewBox="0 0 34 34" className="size-[34px]" fill="none">
            <path d="M1.500 1.500h31v31h-31z" fill="#fff" />
            <path d="M1.500 1.500h31v5h-31z" fill="#c8c6c4" />
            <path d="M1.500 6.500h31M1.500 15h31M1.500 24h31M9 24v8M17 24v8M25 24v8M9 6.500V15M25 6.500V15" stroke="#888" />
            <path d="M1.500 1.500h31v31h-31z" stroke="#3b3b3b" strokeWidth="1.500" />
            <circle cx="16" cy="15" r="10" fill="#fff" stroke="#3b3b3b" strokeWidth="1.500" />
            <path d="M10.500 13.500h3.500v6h-3.500z" fill="#c8c6c4" stroke="#777" strokeWidth=".8" />
            <path d="M14 9h4v10.500h-4z" fill="#fff" stroke="#3b3b3b" />
            <path d="M18 11.500h3.500v8H18z" fill="#84c0f0" stroke="#1a6bb5" />
            <path d="M23 22 32 32" stroke="#3b3b3b" strokeWidth="1.500" />
          </svg>
        }
      />
    </Group>
  );
}

function FormulaBar() {
  return (
    <div className="flex h-[47px] items-start bg-[#e6e6e6] bg-linear-to-b from-[#cdcdcd] to-[#e6e6e6] to-[15%] pt-[11px] pl-[5px] text-[#444]">
      <label className="flex h-[26px] w-[103px] items-center border border-[#c6c6c6] bg-white pr-1.5">
        <input aria-label="Name box" defaultValue="M16" className="w-full min-w-0 pl-1.5 text-[12px] outline-none" />
        <svg viewBox="0 0 8 5" className="h-[5px] w-2 shrink-0" fill="#666"><path d="M0 0h8L4 5z" /></svg>
      </label>
      <span className="flex h-[26px] w-[29px] flex-col items-center justify-center gap-[3px]">
        <span className="size-0.5 bg-[#a0a0a0]" />
        <span className="size-0.5 bg-[#a0a0a0]" />
        <span className="size-0.5 bg-[#a0a0a0]" />
      </span>
      <div className="flex h-[26px] w-[110px] items-center border border-[#c6c6c6] bg-white">
        <Tool name="Cancel" className="w-9">
          <svg viewBox="0 0 12 12" className="size-3" stroke="#c0c0c0" strokeWidth="1.600"><path d="M1 1l10 10M11 1 1 11" /></svg>
        </Tool>
        <Tool name="Enter" className="w-9">
          <svg viewBox="0 0 14 12" className="h-3 w-3.5" fill="none" stroke="#c0c0c0" strokeWidth="1.800"><path d="M1 6l4 4.500L13 1" /></svg>
        </Tool>
        <Tool name="Insert function" className="w-9">
          <span className="font-['Liberation_Serif',serif] text-[16px] italic">f<span className="text-[12px]">x</span></span>
        </Tool>
      </div>
      <input aria-label="Formula bar" className="ml-[3px] h-[26px] min-w-0 flex-1 border border-r-0 border-[#c6c6c6] bg-white px-2 text-[12px] outline-none" />
    </div>
  );
}

/* ------------------------------------------------------------------ */
/* Sheet                                                               */
/* ------------------------------------------------------------------ */

function SheetRow({ row, height }: { row: number; height: number }) {
  const tds: ReactNode[] = [];
  for (let c = 0; c < COLS.length; c++) {
    const name = COLS[c][0];
    const ref = name + row;
    const cell: Cell = name === "A" && row > 1 && row < 39 ? { text: row, cls: mid } : cells[ref] ?? { text: null, cls: "" };
    const last = COLS[c + (cell.span ?? 1) - 1][0] + row;
    tds.push(
      <td
        key={ref}
        colSpan={cell.span}
        className={clsx(
          "border-r border-b p-0 pb-0.5 leading-[12px] whitespace-nowrap",
          !cell.cls.includes("align-middle") && "align-bottom",
          blackRight.has(last) ? "border-r-black" : ref === "B27" ? "border-r-transparent" : "border-r-[#d4d4d4]",
          doubleBottom.has(ref)
            ? "border-b-white shadow-[0_1px_0_#000,inset_0_-1px_0_#000]"
            : blackBottom.has(ref) ? "border-b-black" : ref === "E3" || ref === "F3" ? "border-b-[#ffff00]" : "border-b-[#d4d4d4]",
          thickBottom.has(ref) && "shadow-[inset_0_-1px_0_#000]",
          cell.cls,
        )}
      >
        {cell.text}
      </td>,
    );
    c += (cell.span ?? 1) - 1;
  }
  return (
    <tr style={{ height }}>
      <th
        scope="row"
        className={clsx(
          CALIBRI,
          "border-r border-b border-b-[#b8b8b8] p-0 pb-0.5 leading-[12px] font-normal",
          row === 1 ? "align-middle" : "align-bottom",
          row === 16 ? "border-r-[#217346] bg-[#d2d2d2] text-[#217346]" : "border-r-[#9f9f9f] bg-[#e6e6e6]",
        )}
      >
        {row}
      </th>
      {tds}
    </tr>
  );
}

function Sheet() {
  return (
    <main className="bg-[#e6e6e6] pr-1">
      <table className="w-full table-fixed border-separate border-spacing-0 border-r border-[#9f9f9f] bg-white text-black">
        <colgroup>
          <col className="w-[26px]" />
          {COLS.map(([name, w]) => (
            <col key={name} style={w ? { width: w } : undefined} />
          ))}
        </colgroup>
        <thead>
          <tr className="h-[17px] bg-[#e6e6e6]">
            <th aria-label="Select all" className="border-r border-b border-r-[#c0c0c0] border-b-[#9f9f9f] p-0">
              <svg viewBox="0 0 10 10" className="mr-1 ml-auto size-[9px]" fill="#b4b4b4"><path d="M10 0v10H0z" /></svg>
            </th>
            {COLS.map(([name]) => (
              <th
                key={name}
                scope="col"
                className={clsx(
                  CALIBRI,
                  "border-r border-r-[#c0c0c0] p-0 leading-[14px] font-normal",
                  name === "M" ? "border-b-2 border-b-[#217346] bg-[#d2d2d2] text-[#217346]" : "border-b border-b-[#9f9f9f]",
                )}
              >
                {name}
              </th>
            ))}
          </tr>
        </thead>
        <tbody>
          {ROW_HEIGHTS.map((h, i) => (
            <SheetRow key={i} row={i + 1} height={h} />
          ))}
          <tr className="h-1">
            <th className="border-r border-r-[#9f9f9f] bg-[#e6e6e6] p-0" />
            {COLS.map(([name]) => (
              <td key={name} className="border-r border-r-[#d4d4d4] p-0" />
            ))}
          </tr>
        </tbody>
      </table>
    </main>
  );
}

function SheetTabs() {
  return (
    <div className="flex h-[29px] items-start border-t border-b border-t-[#9f9f9f] border-b-[#c6c6c6] bg-[#e6e6e6] pr-1 text-[12px]">
      <div className="flex h-6 w-[100px] items-center gap-[23px] pl-[26px]">
        <button aria-label="Previous sheet">
          <svg viewBox="0 0 5 8" className="h-2 w-[5px]" fill="#b8b8b8"><path d="M5 0v8L0 4z" /></svg>
        </button>
        <button aria-label="Next sheet">
          <svg viewBox="0 0 5 8" className="h-2 w-[5px]" fill="#b8b8b8"><path d="M0 0v8l5-4z" /></svg>
        </button>
      </div>
      <span className="mt-[3px] h-5 w-px bg-[#9f9f9f]" />
      <button className="h-[25px] w-[61px] text-[#444]">INPUT</button>
      <button className="-mt-px h-[26px] w-[76px] border-r border-b-2 border-l border-x-[#9f9f9f] border-b-[#217346] bg-white font-bold text-[#217346]">
        Answers
      </button>
      <button aria-label="New sheet" className="ml-[33px] grid h-[26px] w-4 place-items-center">
        <svg viewBox="0 0 16 16" className="size-4" fill="none" stroke="#777">
          <circle cx="8" cy="8" r="7.500" />
          <path d="M8 4v8M4 8h8" strokeWidth="2" />
        </svg>
      </button>
      <div className="ml-auto flex h-[27px] w-[39.5%] min-w-0 items-center">
        <span className="mr-4 flex flex-col gap-[3px]">
          <span className="size-0.5 bg-[#a0a0a0]" />
          <span className="size-0.5 bg-[#a0a0a0]" />
          <span className="size-0.5 bg-[#a0a0a0]" />
        </span>
        <div className="flex h-[15px] flex-1 bg-[#dadada]">
          <button aria-label="Scroll left" className="grid w-[15px] place-items-center border border-[#ababab] bg-white">
            <svg viewBox="0 0 5 8" className="h-2 w-[5px]" fill="#666"><path d="M5 0v8L0 4z" /></svg>
          </button>
          <span className="mr-[26px] flex-1 border border-[#ababab] bg-white" />
          <button aria-label="Scroll right" className="grid w-[15px] place-items-center border border-[#ababab] bg-white">
            <svg viewBox="0 0 5 8" className="h-2 w-[5px]" fill="#666"><path d="M0 0v8l5-4z" /></svg>
          </button>
        </div>
      </div>
    </div>
  );
}

function StatusBar() {
  return (
    <div className="flex h-[21px] items-center justify-end overflow-hidden bg-[#f3f2f1] text-[11px] whitespace-nowrap text-[#444]">
      <button aria-label="Normal view" className="grid h-full w-10 place-items-center bg-[#d2d0ce]">
        <svg viewBox="0 0 14 13" className="h-[13px] w-3.5" fill="none" stroke="#3b3b3b" strokeWidth="1.200">
          <path d="M.6.6h12.800v11.800H.6zM5 .6v12M9 .6v12M.6 4.500h13M.6 8.500h13" />
        </svg>
      </button>
      <button aria-label="Page layout view" className="grid h-full w-10 place-items-center">
        <svg viewBox="0 0 14 13" className="h-[13px] w-3.5" fill="none" stroke="#3b3b3b" strokeWidth="1.200">
          <path d="M.6.6h12.800v11.800H.6zM3.500 2.800h7v7.500h-7zM5 5h4M5 7h4" />
        </svg>
      </button>
      <button aria-label="Page break preview" className="grid h-full w-10 place-items-center">
        <svg viewBox="0 0 14 13" className="h-[13px] w-3.5" fill="none" stroke="#3b3b3b" strokeWidth="1.200">
          <path d="M.6.6h12.800v11.800H.6zM5 .6v8M9 .6v8M.6 8.500h8.400" />
        </svg>
      </button>
      <button aria-label="Zoom out" className="w-[18px] text-[15px] leading-none">−</button>
      <span className="relative flex h-full w-[102px] items-center">
        <span className="absolute inset-x-0 h-px bg-[#a0a0a0]" />
        <span className="absolute left-1/2 h-1.5 w-px bg-[#a0a0a0]" />
        <input
          type="range"
          aria-label="Zoom"
          defaultValue={45}
          className="relative w-full appearance-none bg-transparent [&::-webkit-slider-thumb]:h-[11px] [&::-webkit-slider-thumb]:w-[5px] [&::-webkit-slider-thumb]:appearance-none [&::-webkit-slider-thumb]:bg-[#666]"
        />
      </span>
      <button aria-label="Zoom in" className="w-[18px] text-[15px] leading-none">+</button>
      <span className="-mr-1.5 ml-2">90%</span>
    </div>
  );
}

function Taskbar() {
  return (
    <footer className="flex h-10 bg-[#11373b] bg-linear-to-r from-[#12343a] via-[#10383a] via-85% to-[#123a3f] text-white">
      <div className="flex w-full bg-[radial-gradient(ellipse_110px_60px_at_23%_60%,#2c3342,transparent),radial-gradient(ellipse_110px_60px_at_69%_50%,#352f45,transparent),radial-gradient(ellipse_130px_90px_at_12%_50%,#23404d,transparent),radial-gradient(ellipse_130px_90px_at_62%_50%,#233c49,transparent)]">
        <button aria-label="Start" className="grid w-[49px] place-items-center">
          <svg viewBox="0 0 16 16" className="size-4" fill="#fff">
            <path d="M0 2.300 6.800 1.300V7.500H0zM7.800 1.200 16 0v7.500H7.800zM0 8.500h6.800v6.200L0 13.700zM7.800 8.500H16V16l-8.200-1.200z" />
          </svg>
        </button>
        <button aria-label="File Explorer" className="ml-1.5 grid w-10 place-items-center border-b-2 border-[#a5f0f0] pt-0.5">
          <svg viewBox="0 0 22 18" className="h-[18px] w-[22px]">
            <path d="M0 0h8l2 2.500h12V18H0z" fill="#fdd368" />
            <path d="M0 0h8l1.500 3H0z" fill="#e3a21a" />
            <path d="M4 18v-6.500L6 9.500h10l2 2V18h-4v-3.500H8V18z" fill="#3f9be0" />
          </svg>
        </button>
        <button aria-label="Chrome" className="ml-[9px] grid w-10 place-items-center border-b-2 border-[#a5f0f0] pt-0.5">
          <svg viewBox="0 0 24 24" className="size-[22px]">
            <circle cx="12" cy="12" r="12" fill="#fdc933" />
            <path d="M12 12 1.600 6A12 12 0 0 1 22.400 6z" fill="#e04a3c" />
            <path d="M12 12 1.600 6A12 12 0 0 0 12 24l5-9z" fill="#2c9d50" />
            <path d="M12 6h10.400A12 12 0 0 0 1.600 6l5.200 9z" fill="#e04a3c" />
            <circle cx="12" cy="12" r="5.800" fill="#fff" />
            <circle cx="12" cy="12" r="4.600" fill="#3f7ff0" />
          </svg>
        </button>
        <button aria-label="Control Panel" className="ml-[9px] grid w-10 place-items-center">
          <svg viewBox="0 0 21 16" className="h-4 w-[21px]">
            <path d="M0 0h21v16H0z" fill="#5cc3f5" />
            <path d="M1 1h19v14H1z" fill="#8bd8fb" />
            <circle cx="6.500" cy="6.500" r="3.800" fill="#1f7fd0" />
            <path d="M6.500 6.500V2.700a3.800 3.800 0 0 1 3.800 3.800z" fill="#fff" />
            <path d="M13 4h5M13 6.500h5M12 9h6" stroke="#1a6bb5" strokeWidth="1.300" />
            <path d="M3 13h8" stroke="#f0a020" strokeWidth="1.500" />
            <path d="M12 13h6" stroke="#1a6bb5" strokeWidth="1.500" />
          </svg>
        </button>
        <button aria-label="Excel" className="ml-[5px] grid w-12 place-items-center border-b-2 border-[#a5f0f0] bg-[#27818c] pt-0.5">
          <svg viewBox="0 0 24 21" className="h-[21px] w-6">
            <path d="M6 0h18v21H6z" fill="#21a366" />
            <path d="M15 0h9v5.500h-9z" fill="#33c481" />
            <path d="M6 10.500h9V21H6zM15 10.500h9V16h-9z" fill="#107c41" />
            <path d="M6 15.500h18V21H6z" fill="#185c37" />
            <path d="M0 5h12v12H0z" fill="#0f6b38" />
            <path d="M3.300 7.500 8.700 14.500M8.700 7.500 3.300 14.500" stroke="#fff" strokeWidth="1.800" />
          </svg>
        </button>
        <div className="ml-auto flex items-center pr-[7px] text-[11px]">
          <svg viewBox="0 0 12 8" className="mr-2.5 h-2 w-3" fill="none" stroke="#fff" strokeWidth="1.400"><path d="M1 7l5-5 5 5" /></svg>
          <svg viewBox="0 0 16 14" className="mr-2 h-3.5 w-4" fill="none" stroke="#fff" strokeWidth="1.100">
            <path d="M5 2h10.500v7.500H4V6M9.500 9.500V13M6 13h7M.6.6h4v4h-4zM2.500 4.600V12" />
          </svg>
          <svg viewBox="0 0 17 14" className="mr-2.5 h-3.5 w-[17px]" fill="none" stroke="#fff" strokeWidth="1.100">
            <path d="M.6 5h2.500L6.500 1.500v11L3.100 9H.6zM9 4.500c1.200 1.500 1.200 3.500 0 5M11.500 2.800c2.200 2.500 2.200 6 0 8.500M14 1c3 3.500 3 8.500 0 12" />
          </svg>
          <div className="mr-[19px] text-center leading-[18px]">
            8:35 AM
            <br />
            5/21/2021
          </div>
          <svg viewBox="0 0 16 17" className="h-[17px] w-4" fill="none" stroke="#fff" strokeWidth="1.200">
            <path d="M.7.7h14.600v12H11L8 16l-3-3.300H.7z" />
          </svg>
        </div>
      </div>
    </footer>
  );
}

export default function App() {
  return (
    <div className="flex min-h-screen w-full flex-col overflow-hidden bg-[#f3f2f1] font-['Open_Sans','Segoe_UI',sans-serif] text-[12px] text-[#444]">
      <Tabs />
      <div className="flex h-[97px] shrink-0 pt-[5px] text-[11px]">
        <Clipboard />
        <FontGroup />
        <Alignment />
        <NumberGroup />
        <StylesGroup />
        <CellsGroup />
        <EditingGroup />
        <AnalysisGroup />
      </div>
      <FormulaBar />
      <Sheet />
      <SheetTabs />
      <StatusBar />
      <Taskbar />
    </div>
  );
}
